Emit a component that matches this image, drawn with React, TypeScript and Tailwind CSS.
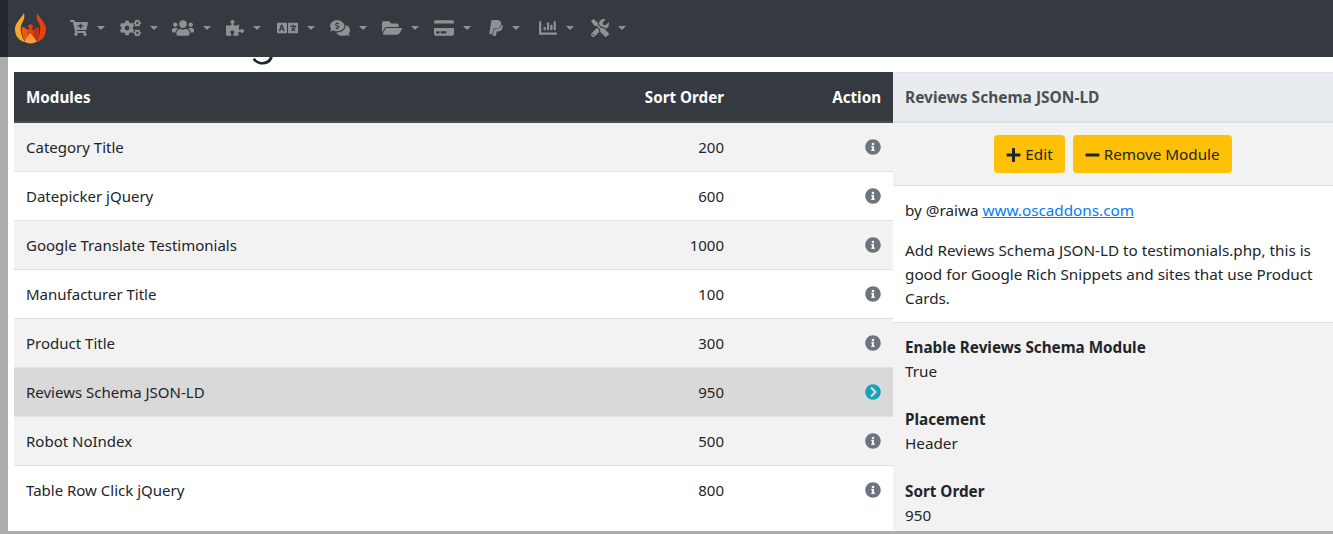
import { FaCartPlus, FaCogs, FaUsers, FaPuzzlePiece, FaLanguage, FaCommentsDollar, FaFolderOpen, FaCreditCard, FaPaypal, FaChartBar, FaTools, FaInfoCircle, FaChevronCircleRight, FaPlus, FaMinus } from "react-icons/fa";

const navIcons = [
  { icon: FaCartPlus, w: "w-[18px]" },
  { icon: FaCogs, w: "w-[21px]" },
  { icon: FaUsers, w: "w-[22px]" },
  { icon: FaPuzzlePiece, w: "w-[18px]" },
  { icon: FaLanguage, w: "w-[21px]" },
  { icon: FaCommentsDollar, w: "w-[20px]" },
  { icon: FaFolderOpen, w: "w-[20px]" },
  { icon: FaCreditCard, w: "w-[20px]" },
  { icon: FaPaypal, w: "w-[14px]" },
  { icon: FaChartBar, w: "w-[18px]" },
  { icon: FaTools, w: "w-[18px]" },
];

const rows = [
  { name: "Category Title", order: 200 },
  { name: "Datepicker jQuery", order: 600 },
  { name: "Google Translate Testimonials", order: 1000 },
  { name: "Manufacturer Title", order: 100 },
  { name: "Product Title", order: 300 },
  { name: "Reviews Schema JSON-LD", order: 950, active: true },
  { name: "Robot NoIndex", order: 500 },
  { name: "Table Row Click jQuery", order: 800 },
];

const details = [
  { label: "Enable Reviews Schema Module", value: "True" },
  { label: "Placement", value: "Header" },
  { label: "Sort Order", value: "950" },
];

const Logo = () => (
  <svg viewBox="0 0 32 32" className="h-[32px] w-[32px]">
    <path d="M9 0 C10 4 9 7 7 10 C5 14 5 21 10 29 C4 28 0 23 0 16 C0 10 5 7 9 0 Z" fill="#f9a72b" />
    <path d="M22 0 C21 4 22 7 24 10 C26 14 26 21 21 29 C27 28 31 23 31 16 C31 10 26 7 22 0 Z" fill="#e8420c" />
    <path d="M7 14 C10 14 13 17 15.5 20 L15.5 30 C10 30 6 24 7 14 Z" fill="#ea5a0c" />
    <path d="M24 14 C21 14 18 17 15.5 20 L15.5 30 C21 30 25 24 24 14 Z" fill="#c9300c" />
    <path d="M15.5 11 L18.5 13 L17 15 L19 20 L15.5 25 L12 20 L14 15 L12.5 13 Z" fill="#e0440e" />
    <path d="M15.5 20 L22 28.5 C18 31 13 31 9 28.5 Z" fill="#fb9c3f" />
  </svg>
);

export default function App() {
  return (
    <div className="relative h-[534px] overflow-hidden bg-[#adadad] font-['Noto_Sans','Liberation_Sans',sans-serif] text-[15px] text-[#212529]">
      <nav className="absolute inset-x-0 top-0 z-10 flex h-[57px] bg-[#343a40]">
        <div className="w-[8px] bg-[#23272b]" />
        <div className="flex items-center pl-[7px] pt-[1px]">
          <Logo />
        </div>
        <ul className="flex items-center pl-[14px] pb-[1px]">
          {navIcons.map(({ icon: Icon, w }, i) => (
            <li key={i} className="flex h-[24px] w-[52.2px] items-center justify-center gap-[9px] text-[#8f9194]">
              <Icon className={`${w} h-[18px]`} />
              <span className="h-0 w-0 border-x-[4.8px] border-t-[4.8px] border-x-transparent border-t-[#8f9194]" />
            </li>
          ))}
        </ul>
      </nav>

      <main className="ml-[8px] h-[531px] overflow-hidden bg-white">
        <h1 className="mt-[2px] h-[70px] pl-[8px] font-['Roboto'] font-light text-[52px] leading-[67px]">Header Tags</h1>
        <div className="flex">
          <div className="ml-[6px] w-[879px]">
            <table className="w-full border-collapse">
              <thead>
                <tr className="h-[50px] border-b-2 border-[#454d55] bg-[#343a40] text-[15.2px] font-bold text-white">
                  <th className="px-[12px] pt-[2px] text-left">Modules</th>
                  <th className="px-[12px] pt-[2px] text-right">Sort Order</th>
                  <th className="w-[157px] px-[12px] pt-[2px] text-right">Action</th>
                </tr>
              </thead>
              <tbody>
                {rows.map((row, i) => (
                  <tr
                    key={row.name}
                    className={`h-[49px] border-t border-[#dee2e6] first:border-t-0 ${row.active ? "bg-[#d9d9d9]" : i % 2 === 0 ? "bg-[#f2f2f2]" : "bg-white"}`}
                  >
                    <td className="px-[12px] pt-[1px]">{row.name}</td>
                    <td className="px-[12px] pt-[1px] text-right">{row.order}</td>
                    <td className="px-[12px] text-right">
                      {row.active ? (
                        <FaChevronCircleRight className="ml-auto h-[16px] w-[16px] text-[#17a2b8]" />
                      ) : (
                        <FaInfoCircle className="ml-auto h-[16px] w-[16px] text-[#6c757d]" />
                      )}
                    </td>
                  </tr>
                ))}
              </tbody>
            </table>
          </div>

          <aside className="w-[440px] shrink-0 text-[15.25px]">
            <div className="flex h-[51px] items-center border-t border-b-2 border-[#dee2e6] bg-[#e9ecef] px-[12px] pt-[2px] text-[15.5px] font-bold text-[#495057]">
              Reviews Schema JSON-LD
            </div>
            <div className="flex h-[63px] items-center justify-center gap-[8px] border-b border-[#dee2e6] bg-[#f2f2f2]">
              <button className="flex h-[38px] items-center gap-[4px] rounded bg-[#ffc107] px-[12px] pt-[1px]">
                <FaPlus className="h-[16px] w-[15px]" />
                Edit
              </button>
              <button className="flex h-[38px] items-center gap-[4px] rounded bg-[#ffc107] px-[12px] pt-[1px]">
                <FaMinus className="h-[16px] w-[15px]" />
                Remove Module
              </button>
            </div>
            <div className="h-[137px] border-b border-[#dee2e6] bg-white px-[12px] pt-[12px] leading-[24px]">
              <p className="mb-[16px]">
                by @raiwa <a href="#" className="text-[#007bff] underline">www.oscaddons.com</a>
              </p>
              <p>Add Reviews Schema JSON-LD to testimonials.php, this is good for Google Rich Snippets and sites that use Product Cards.</p>
            </div>
            <div className="h-[300px] bg-[#f2f2f2] px-[12px] pt-[12px] leading-[24px]">
              {details.map((d) => (
                <div key={d.label} className="mb-[24px]">
                  <div className="font-bold">{d.label}</div>
                  <div>{d.value}</div>
                </div>
              ))}
            </div>
          </aside>
        </div>
      </main>
    </div>
  );
}
